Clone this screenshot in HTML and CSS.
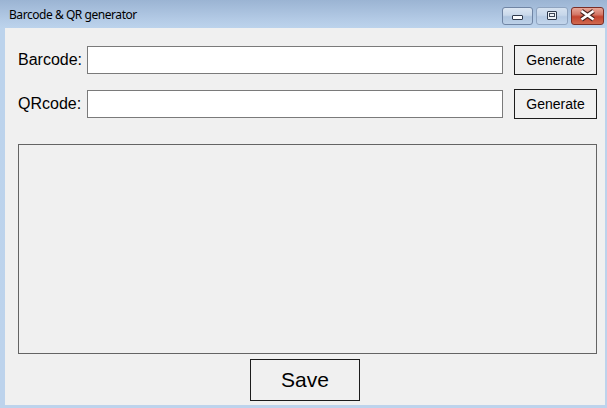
FILE: index.html
```html
<!DOCTYPE html>
<html>
<head>
<meta charset="utf-8">
<title>Barcode &amp; QR generator</title>
<link rel="stylesheet" href="styles.css">
</head>
<body>
<div class="window">
  <div class="titlebar">
    <span class="title">Barcode &amp; QR generator</span>
    <div class="caption">
      <div class="cbtn min">
        <svg width="31" height="18" viewBox="0 0 31 18"><rect x="10.5" y="8.5" width="10" height="4" rx="0.5" fill="#fbfcfe" stroke="#2f3a4c"/></svg>
      </div>
      <div class="cbtn max">
        <svg width="32" height="18" viewBox="0 0 32 18"><rect x="11.5" y="4.5" width="9" height="8" rx="0.5" fill="#eef2f7" stroke="#2f3a4c"/><rect x="13.5" y="6.5" width="5" height="3" fill="none" stroke="#3d4656"/></svg>
      </div>
      <div class="cbtn close">
        <svg width="33" height="18" viewBox="0 0 33 18"><path d="M10.5 4 L22.5 12.5 M22.5 4 L10.5 12.5" stroke="#4a2420" stroke-width="4.6" fill="none"/><path d="M10.5 4 L22.5 12.5 M22.5 4 L10.5 12.5" stroke="#ffffff" stroke-width="2.6" fill="none"/></svg>
      </div>
    </div>
  </div>
  <div class="client">
    <div class="row">
      <label class="lbl">Barcode:</label>
      <input class="field" type="text">
      <button class="gen">Generate</button>
    </div>
    <div class="row row2">
      <label class="lbl">QRcode:</label>
      <input class="field" type="text">
      <button class="gen">Generate</button>
    </div>
    <div class="canvas"></div>
    <div class="save-row">
      <button class="save">Save</button>
    </div>
  </div>
</div>
</body>
</html>
```
FILE: styles.css
```css
html, body {
  margin: 0;
  padding: 0;
  background: #bcd3ec;
}
.window {
  width: 607px;
  height: 408px;
  box-sizing: border-box;
  padding: 0 2px 3px 5px;
  display: flex;
  flex-direction: column;
  background: linear-gradient(to bottom, #9bb4d3 0px, #b4cbe6 20px, #bcd3ec 28px, #bdd3ec 100%);
  overflow: hidden;
}
.titlebar {
  height: 28px;
  flex: none;
  display: flex;
  align-items: flex-start;
}
.title {
  font-family: "Noto Sans", "Open Sans", sans-serif;
  font-size: 12px;
  line-height: 16px;
  color: #000;
  margin-top: 7px;
  padding-left: 4px;
  letter-spacing: -0.45px;
}
.caption {
  margin-left: auto;
  margin-right: 1px;
  margin-top: 7px;
  display: flex;
  gap: 3px;
}
.cbtn {
  height: 18px;
  box-sizing: border-box;
  border-radius: 3px;
  display: flex;
  align-items: center;
  justify-content: center;
  overflow: hidden;
}
.cbtn svg { display: block; flex: none; }
.min {
  width: 31px;
  border: 1px solid #7085a4;
  background: linear-gradient(to bottom, #dde7f3 0%, #c9d8ea 45%, #afc5df 55%, #bdd1e8 100%);
}
.max {
  width: 32px;
  border: 1px solid #8fa4c0;
  background: linear-gradient(to bottom, #d6e2f0 0%, #c6d6ea 45%, #b6cae3 55%, #c3d6ec 100%);
}
.close {
  width: 33px;
  border: 1px solid #7a2e26;
  background: linear-gradient(to bottom, #e8a798 0%, #d47868 40%, #c4432f 55%, #d06a4f 100%);
}
.client {
  flex: 1;
  background: #f0f0f0;
  padding: 17px 8px 0 13px;
  display: flex;
  flex-direction: column;
}
.row {
  display: flex;
  align-items: center;
  height: 30px;
}
.row2 {
  margin-top: 14px;
}
.lbl {
  width: 69px;
  flex: none;
  font-family: "Liberation Sans", Arial, sans-serif;
  font-size: 16px;
  color: #000;
}
.field {
  width: 416px;
  height: 28px;
  box-sizing: border-box;
  border: 1px solid #7a7a7a;
  background: #fff;
  margin: 0 11px 0 0;
  padding: 0 3px;
  outline: none;
  flex: none;
}
.gen {
  width: 83px;
  height: 30px;
  box-sizing: border-box;
  border: 1px solid #1c1c1c;
  background: #f0f0f0;
  font-family: "Liberation Sans", Arial, sans-serif;
  font-size: 14px;
  color: #000;
  padding: 0;
  margin: 0;
  flex: none;
}
.canvas {
  margin-top: 25px;
  width: 579px;
  height: 210px;
  box-sizing: border-box;
  border: 1px solid #646464;
  flex: none;
}
.save-row {
  display: flex;
  justify-content: center;
  margin: 5px -8px 0 -13px;
}
.save {
  width: 110px;
  height: 42px;
  box-sizing: border-box;
  border: 1px solid #1c1c1c;
  background: #f0f0f0;
  font-family: "Liberation Sans", Arial, sans-serif;
  font-size: 21px;
  color: #000;
  padding: 0;
  margin: 0;
}
```
